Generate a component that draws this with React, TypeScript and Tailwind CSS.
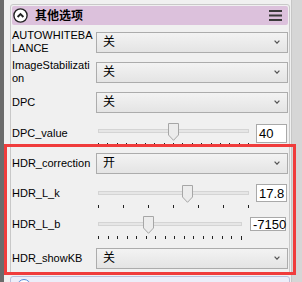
import React from "react";

const CJK = "font-['Liberation_Sans','Noto_Sans_CJK_SC',sans-serif]";

const Chevron = () => (
    <svg width="6" height="4" viewBox="0 0 6 4" className="shrink-0">
        <polyline points="0.6,0.6 3,3.2 5.4,0.6" fill="none" stroke="#555" strokeWidth="1.2" />
    </svg>
);

const Select = ({ value }: { value: string }) => (
    <div className="flex items-center justify-between w-full h-[21px] border border-[#acacac] bg-gradient-to-b from-[#f3f3f3] to-[#e4e4e4] pl-[6px] pr-[7px]">
        <span className={`${CJK} text-[12px] leading-none text-black`}>{value}</span>
        <Chevron />
    </div>
);

type SliderProps = {
    width: number;
    thumb: number;
    ticks: number;
    widthClass: string;
    trackClass: string;
    thumbClass: string;
};

const Slider = ({ ticks, widthClass, trackClass, thumbClass }: SliderProps) => (
    <div className={`${widthClass} self-start flex flex-col shrink-0`}>
        <div className="relative h-[18px]">
            <div className={`absolute top-[6px] left-[2px] h-[4px] ${trackClass} bg-[#e6e6e6] border border-[#d4d4d4]`} />
            <svg width="11" height="18" viewBox="0 0 11 18" className={`absolute top-0 ${thumbClass}`}>
                <polygon points="0.5,0.5 10.5,0.5 10.5,12 5.5,17.3 0.5,12" fill="#ececec" stroke="#a6a6a6" strokeWidth="1" />
            </svg>
        </div>
        <div className={`ml-[2px] mt-[2px] h-[4px] ${trackClass} flex justify-between items-start`}>
            {Array.from({ length: ticks }).map((_, i) => (
                <div key={i} className={`w-[1px] bg-[#222] ${i === ticks - 1 && ticks === 16 ? "h-[4px]" : "h-[3px]"}`} />
            ))}
        </div>
    </div>
);

const Label = ({ children }: { children: React.ReactNode }) => (
    <div className="w-[84px] pr-[2px] shrink-0 text-[11px] leading-[13px] text-black break-all">{children}</div>
);

const TextBox = ({ value, className }: { value: string; className: string }) => (
    <div className={`bg-white border border-[#a9a9a9] pl-[2px] flex items-center text-[13px] leading-none text-black shrink-0 ${className}`}>
        {value}
    </div>
);

const App = (): JSX.Element => {
    return (
        <div className="relative w-[302px] h-[282px] flex bg-[#d6d6d6] overflow-hidden font-['Liberation_Sans',sans-serif]">
            <div className="w-[4px] h-full bg-[#6b6b6b] shrink-0" />
            <div className="w-[288px] h-full bg-[#f0f0f0] border-r border-[#c6c6c6] pl-[6px] shrink-0">
                <div className="mt-[4px] w-[280px] h-[271px] border border-[#c8c8c8] rounded-[3px] p-[1px]">
                    <div className="h-[19px] rounded-[2px] bg-[#dcc1dc] flex items-center justify-between">
                        <div className="flex items-center">
                            <svg width="15" height="15" viewBox="0 0 15 15" className="ml-[1px]">
                                <circle cx="7.5" cy="7.5" r="6.6" fill="#fff" stroke="#222" strokeWidth="1.4" />
                                <polyline points="4.6,9 7.5,6 10.4,9" fill="none" stroke="#222" strokeWidth="1.9" />
                            </svg>
                            <span className={`${CJK} ml-[7px] text-[12px] font-bold leading-none text-black`}>其他选项</span>
                        </div>
                        <svg width="13" height="11" viewBox="0 0 13 11" className="mr-[6px]">
                            <rect x="0" y="0" width="13" height="2" fill="#3a3a3a" />
                            <rect x="0" y="4.5" width="13" height="2" fill="#3a3a3a" />
                            <rect x="0" y="9" width="13" height="2" fill="#3a3a3a" />
                        </svg>
                    </div>

                    <div className="mt-[2px] flex flex-col">
                        <div className="h-[30px] flex items-center">
                            <Label>AUTOWHITEBALANCE</Label>
                            <Select value="关" />
                        </div>
                        <div className="h-[30px] flex items-center">
                            <Label>ImageStabilization</Label>
                            <Select value="关" />
                        </div>
                        <div className="h-[30px] flex items-center">
                            <Label>DPC</Label>
                            <Select value="关" />
                        </div>
                        <div className="h-[32px] flex items-center">
                            <Label>DPC_value</Label>
                            <div className="flex-1 flex items-center gap-[4px] h-full">
                                <div className="mt-[6px] self-start">
                                    <Slider width={156} thumb={72} ticks={17} widthClass="w-[156px]" trackClass="w-[151px]" thumbClass="left-[72px]" />
                                </div>
                                <TextBox value="40" className="w-[31px] h-[19px]" />
                            </div>
                        </div>
                        <div className="h-[28px] flex items-center">
                            <Label>HDR_correction</Label>
                            <Select value="开" />
                        </div>
                        <div className="h-[32px] flex items-center">
                            <Label>HDR_L_k</Label>
                            <div className="flex-1 flex items-center gap-[4px] h-full">
                                <div className="mt-[8px] self-start">
                                    <Slider width={156} thumb={86} ticks={7} widthClass="w-[156px]" trackClass="w-[151px]" thumbClass="left-[86px]" />
                                </div>
                                <TextBox value="17.8" className="w-[31px] h-[18px]" />
                            </div>
                        </div>
                        <div className="h-[30px] flex items-center">
                            <Label>HDR_L_b</Label>
                            <div className="flex-1 flex items-center gap-[4px] h-full">
                                <div className="mt-[7px] self-start">
                                    <Slider width={150} thumb={47} ticks={16} widthClass="w-[150px]" trackClass="w-[144px]" thumbClass="left-[47px]" />
                                </div>
                                <TextBox value="-7150" className="w-[36px] h-[14px]" />
                            </div>
                        </div>
                        <div className="h-[34px] pt-[4px] flex items-center">
                            <Label>HDR_showKB</Label>
                            <Select value="关" />
                        </div>
                    </div>
                </div>

                <div className="mt-[1px] w-[280px] h-[20px] rounded-t-[3px] border border-[#b9c0dc] bg-[#eceef9] pl-[6px] pt-[2px]">
                    <div className="w-[14px] h-[14px] rounded-full border-[1.5px] border-[#4f88d8] bg-white" />
                </div>
            </div>

            <div className="absolute left-[4px] top-[144px] w-[292px] h-[131px] border-[3px] border-[#f03c3c]" />
        </div>
    );
};

export default App;
